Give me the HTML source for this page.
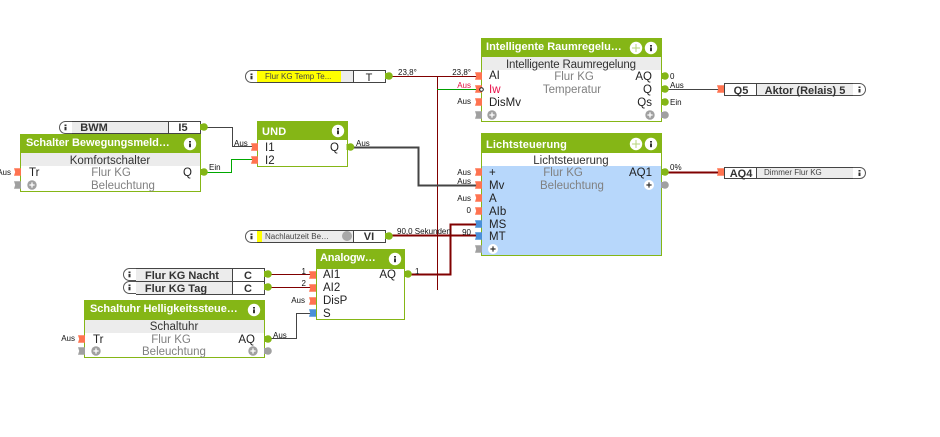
<!DOCTYPE html>
<html><head><meta charset="utf-8">
<style>
html,body{margin:0;padding:0;background:#fff;width:940px;height:437px;overflow:hidden}
svg{display:block}
text{font-family:"Liberation Sans",sans-serif;font-size:11.5px;fill:#222}
.h{font-weight:bold;font-size:11px;fill:#fff;letter-spacing:.2px}
.g{fill:#808080}
.s{font-size:8px;fill:#111}
.b{font-weight:bold;font-size:11px;fill:#333}
.c{text-anchor:middle}
.e{text-anchor:end}
</style></head><body>
<svg width="940" height="437" viewBox="0 0 940 437" xmlns="http://www.w3.org/2000/svg">
<defs>
<polygon id="in" points="-7,-3.700 0,-3.700 0,3.700 -7,3.700 -5.800,0" fill="#ff7350"/>
<polygon id="bl" points="-7,-3.700 0,-3.700 0,3.700 -7,3.700 -5.800,0" fill="#4a90d9"/>
<polygon id="gi" points="-7,-3.700 0,-3.700 0,3.700 -7,3.700 -5.800,0" fill="#a0a0a0"/>
<g id="out"><rect x="0" y="-3" width="3" height="6" fill="#84b616"/><circle cx="4" cy="0" r="3.800" fill="#84b616"/></g>
<g id="go"><rect x="0" y="-3" width="3" height="6" fill="#a0a0a0"/><circle cx="4" cy="0" r="3.800" fill="#a0a0a0"/></g>
<g id="info"><circle r="6.200" fill="#fff"/><rect x="-1" y="-3" width="2" height="1.600" fill="#333"/><rect x="-1" y="-.6" width="2" height="3.800" fill="#333"/></g>
<g id="mv"><circle r="6.200" fill="#fff"/><path d="M-4 0H4M0-4V4" stroke="#b5d47a" stroke-width="1"/></g>
<g id="plusg"><circle r="4.700" fill="#a0a0a0"/><path d="M-2.600 0H2.600M0-2.600V2.600" stroke="#fff" stroke-width="1.300"/></g>
<g id="plusw"><circle r="5" fill="#fff"/><path d="M-2.600 0H2.600M0-2.600V2.600" stroke="#333" stroke-width="1.200"/></g>
<g id="iL"><path d="M13 .5H6.500A6 6 0 0 0 6.500 12.500H13" fill="#fff" stroke="#555"/><rect x="5.500" y="3.500" width="2" height="1.500" fill="#333"/><rect x="5.500" y="5.800" width="2" height="3.500" fill="#333"/></g>
</defs>

<!-- wires -->
<g shape-rendering="crispEdges" fill="none">
<path d="M390 76.500H480" stroke="#800000"/>
<path d="M437.500 76V290" stroke="#800000"/>
<path d="M437 89.500H481" stroke="#00a000"/>
<path d="M205 127.500H232.500V146.500H253" stroke="#444"/>
<path d="M205 172.500H231.500V159.500H253" stroke="#00a800"/>
<path d="M351 147.500H418.500V185.500H480" stroke="#444" stroke-width="2"/>
<path d="M668 89.500H724" stroke="#444"/>
<path d="M665 172.500H724" stroke="#800000" stroke-width="2"/>
<path d="M390 235.500H480" stroke="#800000" stroke-width="2"/>
<path d="M408 274.500H450.500V224.500H480" stroke="#800000" stroke-width="2"/>
<path d="M270 274.500H311" stroke="#800000"/>
<path d="M270 287.500H311" stroke="#800000"/>
<path d="M268 338.500H296.500V313.500H311" stroke="#444"/>
</g>

<!-- Input T -->
<use href="#iL" x="245" y="70"/>
<g shape-rendering="crispEdges">
<rect x="258" y="71" width="95" height="11" fill="#ececec"/>
<rect x="257" y="71" width="84" height="11" fill="#ffff00"/>
<rect x="354" y="71" width="31" height="11" fill="#fff"/>
<path d="M257 70.500H385.500V82.500H257M353.500 71V82" stroke="#444" fill="none"/>
</g>
<text x="265" y="79" style="font-size:8px;fill:#444">Flur KG Temp Te...</text>
<text x="369" y="81" class="c" style="font-size:11px">T</text>
<use href="#out" x="385" y="76"/>
<text x="398" y="75" class="s">23,8°</text>
<text x="471" y="75" class="s e">23,8°</text>
<text x="471" y="88" class="s e" style="fill:#e01040">Aus</text>
<text x="471" y="104" class="s e">Aus</text>

<!-- Raumregelung -->
<g shape-rendering="crispEdges">
<rect x="481.500" y="38.500" width="180" height="83" fill="#fff" stroke="#85b616"/>
<rect x="481" y="38" width="181" height="19" fill="#85b616"/>
<rect x="482" y="57" width="179" height="13" fill="#ececec"/>
</g>
<text x="486" y="50" class="h" textLength="136" lengthAdjust="spacing">Intelligente Raumregelu…</text>
<use href="#mv" x="636" y="48"/><use href="#info" x="651" y="48"/>
<text x="571" y="68" class="c" style="fill:#333" textLength="130" lengthAdjust="spacing">Intelligente Raumregelung</text>
<text x="489" y="79">AI</text><text x="489" y="93" style="fill:#e8104a">Iw</text><text x="489" y="106">DisMv</text>
<text x="574" y="80" class="c g">Flur KG</text><text x="572" y="93" class="c g">Temperatur</text>
<text x="652" y="80" class="e">AQ</text><text x="652" y="93" class="e">Q</text><text x="652" y="106" class="e">Qs</text>
<use href="#in" x="482" y="76"/><use href="#in" x="482" y="89"/><use href="#in" x="482" y="102"/><use href="#gi" x="482" y="115"/>
<circle cx="481.500" cy="89.500" r="1.800" fill="#fff" stroke="#222"/>
<use href="#plusg" x="492" y="115"/><use href="#plusg" x="650" y="115"/>
<use href="#out" x="661" y="76"/><use href="#out" x="661" y="89"/><use href="#out" x="661" y="102"/><use href="#go" x="661" y="115"/>
<text x="670" y="79" class="s">0</text><text x="670" y="88" class="s">Aus</text><text x="670" y="105" class="s">Ein</text>

<!-- Q5 -->
<path d="M853 83.500H859.500A6 6 0 0 1 859.500 95.500H853" fill="#fff" stroke="#555"/>
<g shape-rendering="crispEdges">
<rect x="757" y="84" width="96" height="11" fill="#ececec"/>
<path d="M853 83.500H724.500V95.500H853M756.500 84V95" stroke="#444" fill="none"/>
</g>
<rect x="858.500" y="86.500" width="2" height="1.500" fill="#333"/><rect x="858.500" y="89" width="2" height="3.500" fill="#333"/>
<use href="#in" x="724" y="89"/>
<text x="741" y="94" class="b c">Q5</text>
<text x="805" y="94" class="b c">Aktor (Relais) 5</text>

<!-- AQ4 -->
<path d="M853 167.500H860A5.500 5.500 0 0 1 860 178.500H853" fill="#fff" stroke="#555"/>
<g shape-rendering="crispEdges">
<rect x="757" y="168" width="96" height="10" fill="#ececec"/>
<path d="M853 167.500H724.500V178.500H853M756.500 168V178" stroke="#444" fill="none"/>
</g>
<rect x="858.500" y="170" width="2" height="1.500" fill="#333"/><rect x="858.500" y="172.500" width="2" height="3.500" fill="#333"/>
<use href="#in" x="724" y="172"/>
<text x="741" y="177" class="b c">AQ4</text>
<text x="764" y="175" style="font-size:8px;fill:#444">Dimmer Flur KG</text>
<text x="670" y="170" class="s">0%</text>

<!-- Lichtsteuerung -->
<g shape-rendering="crispEdges">
<rect x="481.500" y="133.500" width="180" height="122" fill="#b7d7fb" stroke="#85b616"/>
<rect x="481" y="133" width="181" height="20" fill="#85b616"/>
<rect x="482" y="153" width="179" height="13" fill="#fff"/>
</g>
<text x="486" y="148" class="h" textLength="81" lengthAdjust="spacing">Lichtsteuerung</text>
<use href="#mv" x="636" y="144"/><use href="#info" x="651" y="144"/>
<text x="571" y="164" class="c" style="fill:#333">Lichtsteuerung</text>
<text x="489" y="176">+</text><text x="489" y="189">Mv</text><text x="489" y="202">A</text><text x="489" y="215">AIb</text><text x="489" y="228">MS</text><text x="489" y="240">MT</text>
<text x="563" y="176" class="c g">Flur KG</text><text x="572" y="189" class="c g">Beleuchtung</text>
<text x="652" y="176" class="e">AQ1</text>
<use href="#plusw" x="649" y="185"/><use href="#plusw" x="493" y="249"/>
<use href="#in" x="482" y="172"/><use href="#in" x="482" y="185"/><use href="#in" x="482" y="198"/><use href="#in" x="482" y="211"/>
<use href="#bl" x="482" y="224"/><use href="#bl" x="482" y="236"/><use href="#gi" x="482" y="249"/>
<use href="#out" x="661" y="172"/><use href="#go" x="661" y="185"/>
<text x="471" y="175" class="s e">Aus</text><text x="471" y="184" class="s e">Aus</text><text x="471" y="201" class="s e">Aus</text><text x="471" y="213" class="s e">0</text><text x="471" y="235" class="s e">90</text>

<!-- BWM -->
<use href="#iL" x="59" y="121"/>
<g shape-rendering="crispEdges">
<rect x="72" y="122" width="96" height="11" fill="#ececec"/>
<rect x="169" y="122" width="31" height="11" fill="#fff"/>
<path d="M72 121.500H200.500V133.500H72M168.500 122V133" stroke="#444" fill="none"/>
</g>
<text x="94" y="131" class="b c">BWM</text><text x="183" y="131" class="b c">I5</text>
<use href="#out" x="200" y="127"/>

<!-- Schalter -->
<g shape-rendering="crispEdges">
<rect x="20.500" y="134.500" width="180" height="57" fill="#fff" stroke="#85b616"/>
<rect x="20" y="134" width="181" height="19" fill="#85b616"/>
<rect x="21" y="153" width="179" height="13" fill="#ececec"/>
</g>
<text x="26" y="146" class="h" textLength="144" lengthAdjust="spacing">Schalter Bewegungsmeld…</text>
<use href="#info" x="190" y="144"/>
<text x="110" y="164" class="c" style="fill:#333">Komfortschalter</text>
<text x="29" y="176">Tr</text><text x="111" y="176" class="c g">Flur KG</text><text x="192" y="176" class="e">Q</text>
<text x="123" y="189" class="c g">Beleuchtung</text>
<use href="#in" x="21" y="172"/><use href="#gi" x="21" y="185"/><use href="#plusg" x="32" y="185"/>
<use href="#out" x="200" y="172"/>
<text x="11" y="175" class="s e">Aus</text><text x="209" y="170" class="s">Ein</text>

<!-- UND -->
<g shape-rendering="crispEdges">
<rect x="257.500" y="121.500" width="90" height="45" fill="#fff" stroke="#85b616"/>
<rect x="257" y="121" width="91" height="19" fill="#85b616"/>
</g>
<text x="262" y="135" class="h">UND</text>
<use href="#info" x="338" y="131"/>
<text x="265" y="151">I1</text><text x="265" y="164">I2</text><text x="339" y="151" class="e">Q</text>
<use href="#in" x="258" y="147"/><use href="#in" x="258" y="160"/>
<use href="#out" x="346.500" y="147"/>
<text x="234" y="146" class="s">Aus</text><text x="356" y="146" class="s">Aus</text>

<!-- VI -->
<use href="#iL" x="245" y="230"/>
<g shape-rendering="crispEdges">
<rect x="257" y="231" width="96" height="11" fill="#ececec"/>
<rect x="257" y="231" width="5" height="11" fill="#ffff00"/>
<rect x="354" y="231" width="31" height="11" fill="#fff"/>
<path d="M257 230.500H385.500V242.500H257M353.500 231V242" stroke="#444" fill="none"/>
</g>
<text x="265" y="239" style="font-size:8px;fill:#444">Nachlautzeit  Be…</text>
<circle cx="347" cy="236" r="5" fill="#a8a8a8"/>
<text x="369" y="240" class="b c">VI</text>
<use href="#out" x="385" y="236"/>
<text x="397" y="234" class="s">90,0 Sekunden</text>

<!-- Analog -->
<g shape-rendering="crispEdges">
<rect x="316.500" y="249.500" width="88" height="70" fill="#fff" stroke="#85b616"/>
<rect x="316" y="249" width="89" height="20" fill="#85b616"/>
</g>
<text x="320" y="261" class="h" textLength="56" lengthAdjust="spacing">Analogw…</text>
<use href="#info" x="395" y="259"/>
<text x="323" y="278">AI1</text><text x="323" y="291">AI2</text><text x="323" y="304">DisP</text><text x="323" y="317">S</text>
<text x="396" y="278" class="e">AQ</text>
<use href="#in" x="316" y="275"/><use href="#in" x="316" y="288"/><use href="#in" x="316" y="301"/><use href="#bl" x="316" y="313"/>
<use href="#out" x="404" y="274"/>
<text x="415" y="274" class="s">1</text><text x="306" y="274" class="s e">1</text><text x="306" y="286" class="s e">2</text><text x="305" y="303" class="s e">Aus</text>

<!-- C blocks -->
<use href="#iL" x="123" y="268"/><use href="#iL" x="123" y="281"/>
<g shape-rendering="crispEdges">
<rect x="136" y="269" width="96" height="25" fill="#ececec"/>
<rect x="233" y="269" width="31" height="25" fill="#fff"/>
<path d="M136 268.500H264.500V294.500H136M136 281.500H264.500M232.500 269V294" stroke="#444" fill="none"/>
</g>
<text x="182" y="279" class="b c">Flur KG Nacht</text><text x="176" y="292" class="b c">Flur KG Tag</text>
<text x="248" y="279" class="b c">C</text><text x="248" y="292" class="b c">C</text>
<use href="#out" x="264" y="274"/><use href="#out" x="264" y="287"/>

<!-- Schaltuhr -->
<g shape-rendering="crispEdges">
<rect x="84.500" y="300.500" width="180" height="57" fill="#fff" stroke="#85b616"/>
<rect x="84" y="300" width="181" height="20" fill="#85b616"/>
<rect x="85" y="320" width="179" height="13" fill="#ececec"/>
</g>
<text x="90" y="312" class="h" textLength="148" lengthAdjust="spacing">Schaltuhr Helligkeitssteue…</text>
<use href="#info" x="254" y="310"/>
<text x="174" y="330" class="c" style="fill:#333">Schaltuhr</text>
<text x="93" y="343">Tr</text><text x="171" y="343" class="c g">Flur KG</text><text x="255" y="343" class="e">AQ</text>
<text x="174" y="355" class="c g">Beleuchtung</text>
<use href="#in" x="85" y="339"/><use href="#gi" x="85" y="351"/><use href="#plusg" x="96" y="351"/><use href="#plusg" x="253" y="351"/>
<use href="#out" x="264" y="339"/><use href="#go" x="264" y="351"/>
<text x="75" y="341" class="s e">Aus</text><text x="273" y="338" class="s">Aus</text>
</svg>
</body></html>
